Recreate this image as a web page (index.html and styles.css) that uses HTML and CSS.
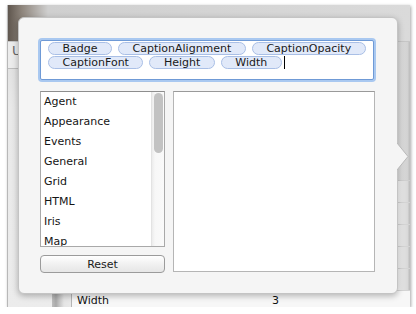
FILE: index.html
```html
<!DOCTYPE html>
<html>
<head>
<meta charset="utf-8">
<link rel="stylesheet" href="styles.css">
</head>
<body>
<div class="window">
  <div class="toolbar">
    <span class="tb-text">Ur</span>
  </div>
  <div class="content">
    <div class="sidebar"></div>
    <div class="splitter"></div>
    <div class="table">
      <div class="spacer"></div>
      <div class="row"></div>
      <div class="row"></div>
      <div class="row"></div>
      <div class="row"></div>
      <div class="row"></div>
      <div class="row last"><span class="cell-name">Width</span><span class="cell-val">3</span></div>
    </div>
  </div>

  <div class="popover">
    <svg class="arrow" width="12" height="27" viewBox="0 0 12 27">
      <polygon points="0,0 11,13.5 0,27" fill="#f5f5f5"/>
      <polyline points="0,0 11,13.5 0,27" fill="none" stroke="#b9b9b9" stroke-width="1"/>
    </svg>
    <div class="tokenfield">
      <span class="token">Badge</span>
      <span class="token">CaptionAlignment</span>
      <span class="token">CaptionOpacity</span>
      <span class="token">CaptionFont</span>
      <span class="token">Height</span>
      <span class="token">Width</span>
      <span class="caret"></span>
    </div>
    <div class="main">
      <div class="leftcol">
        <div class="listbox">
          <ul class="list">
            <li>Agent</li>
            <li>Appearance</li>
            <li>Events</li>
            <li>General</li>
            <li>Grid</li>
            <li>HTML</li>
            <li>Iris</li>
            <li>Map</li>
          </ul>
          <div class="scroller"><div class="thumb"></div></div>
        </div>
        <button class="reset">Reset</button>
      </div>
      <div class="pane"></div>
    </div>
  </div>
</div>
</body>
</html>
```
FILE: styles.css
```css
html, body {
  margin: 0;
  padding: 0;
  background: #ffffff;
  font-family: "DejaVu Sans", "Liberation Sans", sans-serif;
  font-size: 11px;
  color: #1c1c1c;
}

.window {
  position: relative;
  width: 403px;
  height: 302px;
  margin: 5px 0 0 7px;
  background: #ececec;
  border-left: 1px solid #b8b8b8;
  box-sizing: border-box;
  box-shadow: 1px 1px 3px rgba(0,0,0,0.35);
  overflow: hidden;
  display: flex;
  flex-direction: column;
}

.toolbar {
  height: 36px;
  flex: none;
  background: linear-gradient(to right, #5f564e 0px, #8e857c 14px, #cfcfcf 40px, #dadada 100%);
  border-bottom: 1px solid #c6c6c6;
  position: relative;
}
.tb-text {
  position: absolute;
  left: 4px;
  top: 38px;
  color: #6a6a6a;
  font-size: 13px;
}

.content {
  flex: 1;
  display: flex;
}
.sidebar {
  width: 44px;
  background: linear-gradient(to bottom, #e2e2e2 0, #e9e9e9 40px, #ececec 100%);
  border-top: 1px solid #bdbdbd;
  margin-top: 26px;
}
.splitter {
  width: 20px;
  background: linear-gradient(to right, #bdbdbd 0, #a9a9a9 4px, #c9c9c9 8px, #e5e5e5 12px, #e9e9e9 19px, #b5b5b5 19px);
}
.table {
  flex: 1;
  display: flex;
  flex-direction: column;
  background: #f3f3f3;
}
.spacer {
  height: 138px;
  border-bottom: 1px solid #cfcfcf;
  background: linear-gradient(to right, #f3f3f3 0, #f3f3f3 323px, #dcdcdc 326px, #d2d2d2 336px, #c0c0c0 337px);
}
.row {
  height: 21px;
  border-bottom: 1px solid #d4d4d4;
  background: linear-gradient(to right, #f6f6f6 0, #f6f6f6 326px, #e4e4e4 330px, #d8d8d8 336px, #bfbfbf 337px);
  position: relative;
}
.row.last {
  background: #f7f7f7;
  border-bottom: none;
}
.cell-name {
  position: absolute;
  left: 5px;
  top: 3px;
  color: #111;
}
.cell-val {
  position: absolute;
  left: 200px;
  top: 3px;
  color: #111;
}

/* Popover */
.popover {
  position: absolute;
  left: 10px;
  top: 12px;
  width: 380px;
  height: 277px;
  box-sizing: border-box;
  background: #f5f5f5;
  border: 1px solid #c4c4c4;
  border-radius: 6px;
  box-shadow: 0 2px 6px rgba(0,0,0,0.28);
  padding: 22px 0 0 21px;
}
.arrow {
  position: absolute;
  right: -12px;
  top: 125px;
}

.tokenfield {
  width: 334px;
  height: 40px;
  box-sizing: border-box;
  background: #ffffff;
  border: 1px solid #6f9ad6;
  border-radius: 2px;
  box-shadow: 0 0 0 2px #a9c8f0;
  padding: 1px 2px 0 7px;
  display: flex;
  flex-wrap: wrap;
  align-content: flex-start;
  align-items: center;
  column-gap: 6px;
  row-gap: 1px;
}
.token {
  height: 13px;
  line-height: 12px;
  box-sizing: border-box;
  padding: 0 13.5px;
  background: #e1e9f9;
  border: 1px solid #a9bfe6;
  border-radius: 7px;
  color: #1a1a1a;
  font-size: 11px;
  white-space: nowrap;
}
.caret {
  width: 1px;
  height: 13px;
  background: #000;
  margin-left: -4px;
}

.main {
  margin-top: 11px;
  display: flex;
  gap: 8px;
}
.leftcol {
  width: 125px;
  display: flex;
  flex-direction: column;
  gap: 8px;
}
.listbox {
  height: 156px;
  box-sizing: border-box;
  background: #fff;
  border: 1px solid #a9a9a9;
  border-top-color: #8e8e8e;
  display: flex;
  overflow: hidden;
}
.list {
  list-style: none;
  margin: 0;
  padding: 0 0 0 3px;
  flex: 1;
}
.list li {
  height: 20px;
  line-height: 20px;
  color: #151515;
}
.scroller {
  width: 13px;
  background: linear-gradient(to right, #ececec, #f7f7f7 3px, #fafafa);
  border-left: 1px solid #e3e3e3;
  padding: 1px 0 0 2px;
  box-sizing: border-box;
}
.thumb {
  width: 9px;
  height: 60px;
  border-radius: 5px;
  background: #c2c2c2;
}
.reset {
  width: 125px;
  height: 18px;
  margin: 0;
  padding: 0;
  border: 1px solid #9b9b9b;
  border-radius: 4px;
  background: linear-gradient(to bottom, #ffffff, #f1f1f1 50%, #e6e6e6);
  font-family: "DejaVu Sans", "Liberation Sans", sans-serif;
  font-size: 11px;
  color: #1a1a1a;
  line-height: 15px;
}
.pane {
  width: 202px;
  height: 181px;
  box-sizing: border-box;
  background: #fff;
  border: 1px solid #b5b5b5;
  border-top-color: #9a9a9a;
}
```
